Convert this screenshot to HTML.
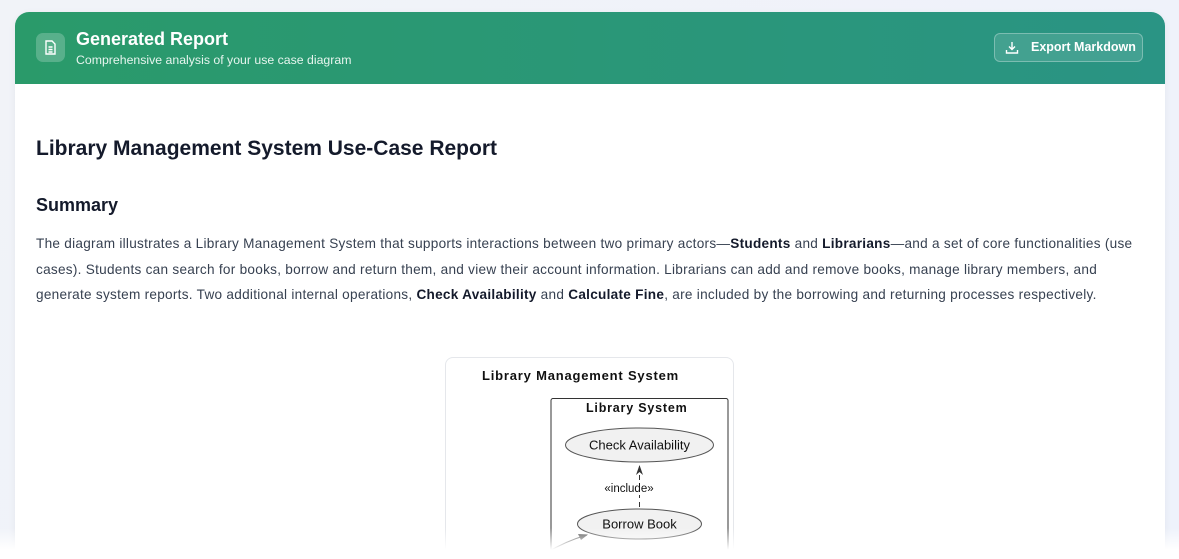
<!DOCTYPE html>
<html><head><meta charset="utf-8"><style>
*{margin:0;padding:0;box-sizing:border-box}
body{width:1179px;height:559px;overflow:hidden;background:linear-gradient(135deg,#f1f3f8,#eef2fb);font-family:"Liberation Sans",sans-serif;position:relative}
.card{position:absolute;left:15px;top:12px;width:1150px;height:547px;background:#fff;border-radius:14px 14px 0 0;overflow:hidden;box-shadow:0 2px 8px rgba(0,0,0,.05)}
.hdr{height:72px;background:linear-gradient(90deg,#2a9a6a,#2a9484);position:relative;color:#fff}
.ic{position:absolute;left:21px;top:21px;width:29px;height:29px;border-radius:7px;background:rgba(255,255,255,.22)}
.t1{position:absolute;left:61px;top:17px;font-size:18px;font-weight:bold}
.t2{position:absolute;left:61px;top:41px;font-size:12.3px;color:#e6f5ee}
.btn{position:absolute;right:22px;top:21px;width:149px;height:29px;border:1px solid rgba(255,255,255,.3);background:rgba(255,255,255,.12);border-radius:6px;font-size:12.5px;font-weight:bold;line-height:27px;padding-left:36px}
.btn svg{position:absolute;left:10px;top:7px}
h1{position:absolute;left:21px;top:125px;font-size:21px;color:#141a2b}
h2{position:absolute;left:21px;top:183px;font-size:18px;color:#141a2b}
p{position:absolute;left:21px;top:219px;white-space:nowrap;font-size:13.6px;letter-spacing:.27px;line-height:25.5px;color:#374151}
p b{color:#141a2b}
.dg{position:absolute;left:430px;top:345px;width:289px;height:202px;border:1px solid #e5e7eb;border-bottom:none;border-radius:8px 8px 0 0;overflow:hidden}
.fade{position:absolute;left:0;top:528px;width:1179px;height:31px;background:linear-gradient(rgba(255,255,255,0),#fff 70%);z-index:5}
</style></head><body>
<div class="card">
<div class="hdr">
<div class="ic"><svg width="29" height="29" viewBox="0 0 29 29" fill="none" stroke="#fff" stroke-width="1.4"><path d="M10 8h6l3 3v10h-9z"/><path d="M12.5 14h4M12.5 16.5h4M12.5 19h4"/></svg></div>
<div class="t1">Generated Report</div>
<div class="t2">Comprehensive analysis of your use case diagram</div>
<div class="btn"><svg width="14" height="14" viewBox="0 0 14 14" fill="none" stroke="#fff" stroke-width="1.4"><path d="M7 1v7M4 5.5 7 8.5 10 5.5M1.5 9v3h11V9"/></svg>Export Markdown</div>
</div>
<h1>Library Management System Use-Case Report</h1>
<h2>Summary</h2>
<p>The diagram illustrates a Library Management System that supports interactions between two primary actors—<b>Students</b> and <b>Librarians</b>—and a set of core functionalities (use<br>cases). Students can search for books, borrow and return them, and view their account information. Librarians can add and remove books, manage library members, and<br>generate system reports. Two additional internal operations, <b>Check Availability</b> and <b>Calculate Fine</b>, are included by the borrowing and returning processes respectively.</p>
<div class="dg"><svg width="289" height="202" font-family="Liberation Sans,sans-serif">
<text x="36" y="22" font-size="13" font-weight="bold" letter-spacing=".8" fill="#111">Library Management System</text>
<rect x="105" y="40.5" width="177" height="230" rx="2" fill="none" stroke="#333"/>
<text x="140" y="54" font-size="12.5" font-weight="bold" letter-spacing=".8" fill="#111">Library System</text>
<ellipse cx="193.5" cy="87" rx="74" ry="17" fill="#f1f1f1" stroke="#555"/>
<text x="193.5" y="91.5" font-size="13" text-anchor="middle" fill="#111">Check Availability</text>
<path d="M193.5 108v50" stroke="#333" stroke-dasharray="5 4"/>
<path d="M190 117 193.5 107 197 117 193.5 114z" fill="#333"/>
<rect x="150" y="123" width="64" height="14" fill="#fff"/>
<text x="183" y="134" font-size="11.5" text-anchor="middle" fill="#111">«include»</text>
<ellipse cx="193.5" cy="166" rx="62" ry="15" fill="#f1f1f1" stroke="#555"/>
<text x="193.5" y="170.5" font-size="13" text-anchor="middle" fill="#111">Borrow Book</text>
<path d="M100 195q20-12 41-18" stroke="#555" fill="none"/>
<path d="M142 176.5 132 176 135 182z" fill="#555"/>
</svg></div>
</div>
<div class="fade"></div>
</body></html>
